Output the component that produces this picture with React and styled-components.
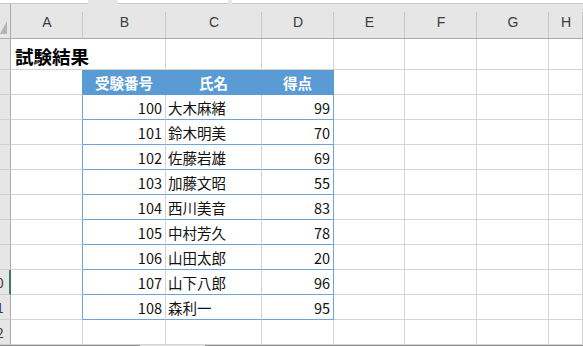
import React from 'react';
import styled, { createGlobalStyle } from 'styled-components';

const GlobalStyle = createGlobalStyle`
  html, body {
    margin: 0;
    padding: 0;
    background: #fff;
    overflow: hidden;
  }
  * {
    box-sizing: border-box;
  }
`;

const GRID = '#d4d4d4';
const BLUE = '#5b9bd5';
const BLUE_LINE = '#72a3d8';
const HEAD_BG = '#e6e6e6';
const FONT = '"Noto Sans CJK JP", "Noto Sans", sans-serif';

const columns = [
  { key: 'A', w: 72 },
  { key: 'B', w: 83 },
  { key: 'C', w: 96 },
  { key: 'D', w: 72 },
  { key: 'E', w: 71 },
  { key: 'F', w: 72 },
  { key: 'G', w: 72 },
  { key: 'H', w: 0 },
];

const data = [
  [100, '大木麻緒', 99],
  [101, '鈴木明美', 70],
  [102, '佐藤岩雄', 69],
  [103, '加藤文昭', 55],
  [104, '西川美音', 83],
  [105, '中村芳久', 78],
  [106, '山田太郎', 20],
  [107, '山下八郎', 96],
  [108, '森利一', 95],
];

const Sheet = styled.div`
  width: 583px;
  height: 346px;
  display: flex;
  flex-direction: column;
  overflow: hidden;
  font-family: ${FONT};
  background: #fff;
`;

const Strip = styled.div`
  display: flex;
  height: 4px;
  flex-shrink: 0;
`;

const StripPiece = styled.div`
  height: 100%;
  width: ${p => (p.$w ? `${p.$w}px` : 'auto')};
  flex: ${p => (p.$w ? '0 0 auto' : '1')};
  background: ${p => (p.$gray ? HEAD_BG : '#fff')};
  border-bottom: 1px solid ${p => (p.$gray ? HEAD_BG : '#c6c6c6')};
`;

const Row = styled.div`
  display: flex;
  height: ${p => p.$h}px;
  flex-shrink: 0;
`;

const Corner = styled.div`
  position: relative;
  width: 11px;
  height: 100%;
  background: ${HEAD_BG};
  border-right: 1px solid #ababab;
  border-bottom: 1px solid #ababab;

  &::after {
    content: '';
    position: absolute;
    right: 3px;
    bottom: 4px;
    width: 7px;
    height: 13px;
    background: #b4b4b4;
    clip-path: polygon(100% 0, 100% 100%, 0 100%);
  }
`;

const ColHead = styled.div`
  position: relative;
  width: ${p => (p.$w ? `${p.$w}px` : 'auto')};
  flex: ${p => (p.$w ? '0 0 auto' : '1')};
  height: 100%;
  background: ${HEAD_BG};
  border-bottom: 1px solid #ababab;
  display: flex;
  align-items: center;
  justify-content: center;
  padding-top: 1px;
  font-family: "Liberation Sans", "Noto Sans", sans-serif;
  font-size: 14px;
  color: #3c3c3c;

  &::after {
    content: '';
    position: absolute;
    right: 0;
    top: 8px;
    bottom: 0;
    width: 1px;
    background: #c8c8c8;
  }
`;

const RowHead = styled.div`
  width: 11px;
  height: 100%;
  flex-shrink: 0;
  overflow: hidden;
  background: ${HEAD_BG};
  border-right: ${p => (p.$selected ? '2px solid #3f7d56' : '1px solid #ababab')};
  border-bottom: 1px solid #d0d0d0;
  display: flex;
  align-items: center;
`;

/* row numbers sit in a header that is scrolled mostly out of view:
   only the last digit of the two-digit numbers shows */
const RowNum = styled.span`
  flex: 0 0 28px;
  margin-left: -18px;
  text-align: center;
  font-size: 14px;
  color: #3c3c3c;
`;

const Cell = styled.div`
  width: ${p => (p.$w ? `${p.$w}px` : 'auto')};
  flex: ${p => (p.$w ? '0 0 auto' : '1')};
  height: 100%;
  display: flex;
  align-items: center;
  justify-content: ${p => (p.$align === 'right' ? 'flex-end' : p.$align === 'center' ? 'center' : 'flex-start')};
  padding: 1px 3px 0 ${p => (p.$align === 'left' ? '2px' : '3px')};
  white-space: nowrap;
  background: ${p => p.$bg || 'transparent'};
  border-right: 1px solid ${p => p.$rb || GRID};
  border-bottom: 1px solid ${p => p.$bb || GRID};
  font-size: 14.5px;
  color: ${p => (p.$bg ? '#fff' : '#111')};
  font-weight: ${p => (p.$bold ? 700 : 400)};
`;

const Title = styled.span`
  font-size: 18.5px;
  font-weight: 700;
  color: #000;
  padding-left: 1px;
  padding-top: 2px;
`;

const Footer = styled.div`
  display: flex;
  height: 1px;
  flex-shrink: 0;
`;

const FooterPiece = styled.div`
  width: ${p => (p.$w ? `${p.$w}px` : 'auto')};
  flex: ${p => (p.$w ? '0 0 auto' : '1')};
  background: ${p => (p.$light ? '#e4e4e4' : '#8c8c8c')};
`;

const PlainCells = ({ from }) =>
  columns.slice(from).map(c => <Cell key={c.key} $w={c.w} />);

const Head = ({ n, selected }) => (
  <RowHead $selected={selected}>
    {n >= 10 && <RowNum>{n}</RowNum>}
  </RowHead>
);

const App = () => {
  return (
    <>
      <GlobalStyle />
      <Sheet>
        <Strip>
          <StripPiece $w={88} />
          <StripPiece $w={30} $gray />
          <StripPiece $w={110} />
          <StripPiece $w={4} $gray />
          <StripPiece />
        </Strip>

        <Row $h={35}>
          <Corner />
          {columns.map(c => (
            <ColHead key={c.key} $w={c.w}>{c.key}</ColHead>
          ))}
        </Row>

        <Row $h={31}>
          <Head n={1} />
          <Cell $w={72} $rb="#fff">
            <Title>試験結果</Title>
          </Cell>
          <PlainCells from={1} />
        </Row>

        <Row $h={25}>
          <Head n={2} />
          <Cell $w={72} $rb={BLUE} />
          <Cell $w={83} $align="center" $bg={BLUE} $rb={BLUE} $bb={BLUE} $bold>受験番号</Cell>
          <Cell $w={96} $align="center" $bg={BLUE} $rb={BLUE} $bb={BLUE} $bold>氏名</Cell>
          <Cell $w={72} $align="center" $bg={BLUE} $rb={BLUE} $bb={BLUE} $bold>得点</Cell>
          <PlainCells from={4} />
        </Row>

        {data.map(([no, name, score], i) => (
          <Row key={no} $h={25}>
            <Head n={i + 3} selected={i + 3 === 10} />
            <Cell $w={72} $rb={BLUE_LINE} />
            <Cell $w={83} $align="right" $bb={BLUE_LINE}>{no}</Cell>
            <Cell $w={96} $align="left" $bb={BLUE_LINE}>{name}</Cell>
            <Cell $w={72} $align="right" $rb={BLUE_LINE} $bb={BLUE_LINE}>{score}</Cell>
            <PlainCells from={4} />
          </Row>
        ))}

        <Row $h={25}>
          <Head n={12} />
          <PlainCells from={0} />
        </Row>

        <Footer>
          <FooterPiece $w={140} />
          <FooterPiece $w={65} $light />
          <FooterPiece />
        </Footer>
      </Sheet>
    </>
  );
};

export default App;
